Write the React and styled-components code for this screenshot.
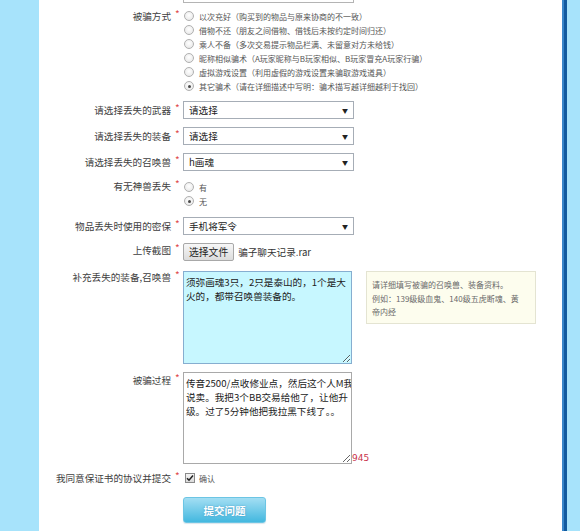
import React from "react";
import styled, { createGlobalStyle } from "styled-components";

const GlobalStyle = createGlobalStyle`
  html, body {
    margin: 0;
    padding: 0;
    background: #ffffff;
  }
  body {
    font-family: "Noto Sans CJK SC", "Liberation Sans", sans-serif;
  }
`;

const Page = styled.div`
  display: flex;
  width: 580px;
  height: 531px;
  overflow: hidden;
`;

const SideStrip = styled.div`
  width: 39px;
  flex: none;
  background: #a7e3fb;
`;

const RightEdge = styled.div`
  width: 16px;
  flex: none;
  background: #a7e3fb;
  border-left: 2px solid #3a86c9;
  box-shadow: inset 3px 0 0 #125a9f;
`;

const Main = styled.div`
  flex: 1;
  background: #ffffff;
`;

const TopStub = styled.div`
  margin-left: 144px;
  width: 169px;
  height: 2px;
  border: 1px solid #b4b4b4;
  border-top: none;
`;

const Row = styled.div`
  display: grid;
  grid-template-columns: 132px 12px 1fr;
  align-items: start;
  margin-top: ${({ $top }) => $top ?? 8}px;
`;

const Label = styled.div`
  text-align: right;
  font-size: 9.6px;
  color: #3e3e3e;
  line-height: ${({ $lh }) => $lh ?? 18}px;
  white-space: nowrap;
`;

const Star = styled.div`
  color: #e04a4a;
  font-size: 10px;
  line-height: ${({ $lh }) => $lh ?? 18}px;
  padding-left: 4px;
  margin-top: -2px;
`;

const Options = styled.div`
  display: flex;
  flex-direction: column;
`;

const Option = styled.label`
  display: flex;
  align-items: center;
  height: 14px;
  font-size: 8px;
  color: #555555;
  white-space: nowrap;
`;

const Radio = styled.span`
  width: 8px;
  height: 8px;
  margin: 0 5px 0 1px;
  border: 1px solid #b0b0b0;
  border-radius: 50%;
  background: radial-gradient(circle at 50% 40%, #ffffff 0%, #e4e4e4 100%);
  display: flex;
  align-items: center;
  justify-content: center;
  flex: none;
  &::after {
    content: "";
    width: 3px;
    height: 3px;
    border-radius: 50%;
    background: ${({ $checked }) => ($checked ? "#4a4a4a" : "transparent")};
  }
`;

const SelectWrap = styled.div`
  display: flex;
  align-items: center;
  width: 169px;
  height: 16px;
  border: 1px solid #a6adb6;
  background: #ffffff;
`;

const Select = styled.select`
  appearance: none;
  flex: 1;
  border: none;
  background: transparent;
  font-family: inherit;
  font-size: 9.6px;
  color: #222222;
  padding: 0 0 0 5px;
  height: 16px;
  outline: none;
`;

const Arrow = styled.span`
  font-size: 6px;
  color: #222222;
  margin-right: 5px;
`;

const FileLine = styled.div`
  display: flex;
  align-items: center;
  height: 18px;
  font-size: 9.6px;
  color: #333333;
`;

const FileButton = styled.button`
  height: 18px;
  padding: 0 5px;
  border: 1px solid #a8a8a8;
  border-radius: 2px;
  background: linear-gradient(#f7f7f7, #dcdcdc);
  font-family: inherit;
  font-size: 9.8px;
  color: #222222;
  margin-right: 4px;
`;

const FieldLine = styled.div`
  display: flex;
  align-items: ${({ $end }) => ($end ? "flex-end" : "flex-start")};
`;

const TextArea = styled.textarea`
  width: 169px;
  height: ${({ $h }) => $h}px;
  box-sizing: border-box;
  border: 1px solid ${({ $active }) => ($active ? "#86aed0" : "#a9a9a9")};
  background: ${({ $active }) => ($active ? "#c7f7ff" : "#ffffff")};
  font-family: inherit;
  font-size: 9.6px;
  line-height: 14px;
  color: #222222;
  padding: 3px 2px;
  white-space: pre;
  overflow: hidden;
  outline: none;
  margin: 0;
`;

const Hint = styled.div`
  margin-left: 14px;
  width: 150px;
  padding: 6px 13px 4px 5px;
  background: #fdfdee;
  border: 1px solid #e4e4d2;
  font-size: 8px;
  line-height: 13.5px;
  color: #6a6a6a;
`;

const Counter = styled.span`
  font-family: "DejaVu Sans", sans-serif;
  font-size: 9px;
  line-height: 10px;
  color: #c9334b;
  margin-bottom: 1px;
`;

const Check = styled.span`
  width: 8px;
  height: 8px;
  margin: 0 4px 0 2px;
  border: 1px solid #8a8a8a;
  background: linear-gradient(#f4f4f4, #dadada);
  display: flex;
  align-items: center;
  justify-content: center;
  flex: none;
`;

const SubmitButton = styled.button`
  width: 83px;
  height: 26px;
  border: 1px solid #6cc5e4;
  border-radius: 3px;
  background: linear-gradient(#a3def3, #43b8df);
  color: #ffffff;
  font-family: inherit;
  font-size: 10.5px;
  font-weight: bold;
  text-shadow: 0 0 2px rgba(40, 120, 170, 0.6);
  box-shadow: 0 1px 1px rgba(0, 80, 120, 0.15);
`;

const scamTypes = [
  "以次充好（购买到的物品与原来协商的不一致）",
  "借物不还（朋友之间借物、借钱后未按约定时间归还）",
  "乘人不备（多次交易提示物品栏满、未留意对方未给钱）",
  "昵称相似骗术（A玩家昵称与B玩家相似、B玩家冒充A玩家行骗）",
  "虚拟游戏设置（利用虚假的游戏设置来骗取游戏道具）",
  "其它骗术（请在详细描述中写明：骗术描写越详细越利于找回）",
];

const FormSelect = ({ value }) => (
  <SelectWrap>
    <Select defaultValue={value}>
      <option>{value}</option>
    </Select>
    <Arrow>▼</Arrow>
  </SelectWrap>
);

export default function App() {
  return (
    <>
      <GlobalStyle />
      <Page>
        <SideStrip />
        <Main>
          <TopStub />
          <Row $top={6}>
            <Label $lh={14}>被骗方式</Label>
            <Star $lh={14}>*</Star>
            <Options>
              {scamTypes.map((t, i) => (
                <Option key={t}>
                  <Radio $checked={i === scamTypes.length - 1} />
                  {t}
                </Option>
              ))}
            </Options>
          </Row>
          <Row>
            <Label>请选择丢失的武器</Label>
            <Star>*</Star>
            <FormSelect value="请选择" />
          </Row>
          <Row>
            <Label>请选择丢失的装备</Label>
            <Star>*</Star>
            <FormSelect value="请选择" />
          </Row>
          <Row>
            <Label>请选择丢失的召唤兽</Label>
            <Star>*</Star>
            <FormSelect value="h画魂" />
          </Row>
          <Row $top={9}>
            <Label $lh={12}>有无神兽丢失</Label>
            <Star $lh={12}>*</Star>
            <Options>
              <Option>
                <Radio />有
              </Option>
              <Option>
                <Radio $checked />无
              </Option>
            </Options>
          </Row>
          <Row $top={9}>
            <Label>物品丢失时使用的密保</Label>
            <Star>*</Star>
            <FormSelect value="手机将军令" />
          </Row>
          <Row>
            <Label $lh={14}>上传截图</Label>
            <Star $lh={14}>*</Star>
            <FileLine>
              <FileButton>选择文件</FileButton>
              骗子聊天记录.rar
            </FileLine>
          </Row>
          <Row $top={10}>
            <Label $lh={12}>补充丢失的装备,召唤兽</Label>
            <Star $lh={12}>*</Star>
            <FieldLine>
              <TextArea
                $active
                $h={93}
                defaultValue={"须弥画魂3只，2只是泰山的，1个是大\n火的，都带召唤兽装备的。"}
              />
              <Hint>
                请详细填写被骗的召唤兽、装备资料。
                <br />
                例如：139级级血鬼、140级五虎断魂、黄帝内经
              </Hint>
            </FieldLine>
          </Row>
          <Row>
            <Label $lh={16}>被骗过程</Label>
            <Star $lh={16}>*</Star>
            <FieldLine $end>
              <TextArea
                $h={92}
                defaultValue={
                  "传音2500/点收修业点，然后这个人M我\n说卖。我把3个BB交易给他了，让他升\n级。过了5分钟他把我拉黑下线了。。"
                }
              />
              <Counter>945</Counter>
            </FieldLine>
          </Row>
          <Row $top={7}>
            <Label $lh={14}>我同意保证书的协议并提交</Label>
            <Star $lh={14}>*</Star>
            <Option>
              <Check>
                <svg width="8" height="8" viewBox="0 0 8 8">
                  <path d="M1 4.2 L3 6.2 L7 1.5" fill="none" stroke="#222" strokeWidth="1.5" />
                </svg>
              </Check>
              确认
            </Option>
          </Row>
          <Row $top={12}>
            <span />
            <span />
            <SubmitButton>提交问题</SubmitButton>
          </Row>
        </Main>
        <RightEdge />
      </Page>
    </>
  );
}
